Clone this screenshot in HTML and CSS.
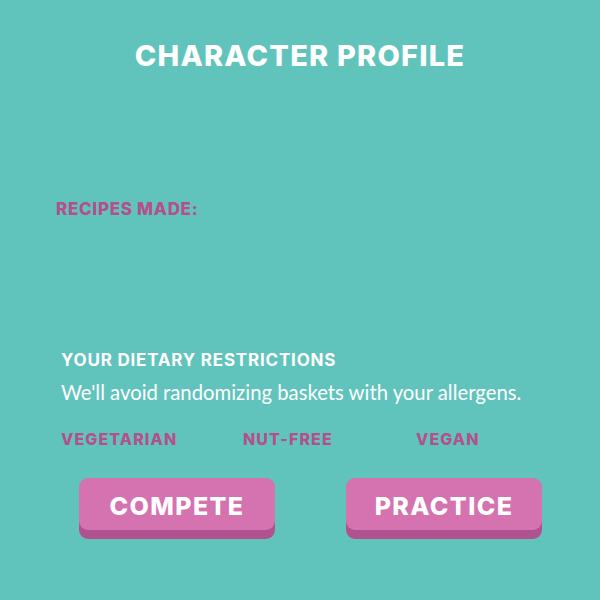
FILE: index.html
```html
<!DOCTYPE html>
<html>
<head>
<meta charset="utf-8">
<link rel="stylesheet" href="styles.css">
</head>
<body>
<main class="page">
  <h1 class="title">CHARACTER PROFILE</h1>
  <section class="recipes">
    <h2 class="recipes-label">RECIPES MADE:</h2>
  </section>
  <section class="diet">
    <h3 class="diet-title">YOUR DIETARY RESTRICTIONS</h3>
    <p class="diet-desc">We'll avoid randomizing baskets with your allergens.</p>
    <div class="diet-options">
      <span class="opt">VEGETARIAN</span>
      <span class="opt">NUT-FREE</span>
      <span class="opt">VEGAN</span>
    </div>
  </section>
  <div class="actions">
    <button class="btn">COMPETE</button>
    <button class="btn">PRACTICE</button>
  </div>
</main>
</body>
</html>
```
FILE: styles.css
```css
html, body {
  margin: 0;
  padding: 0;
}
body {
  background: #61c4bc;
  width: 600px;
  height: 600px;
  overflow: hidden;
  font-family: "Inter", sans-serif;
}
.page {
  display: flex;
  flex-direction: column;
}
.title {
  margin: 38px 0 0;
  text-align: center;
  color: #ffffff;
  font-weight: 800;
  font-size: 29px;
  line-height: 36px;
  letter-spacing: 1.2px;
}
.recipes {
  padding: 0 0 0 56px;
  margin-top: 125px;
  height: 151px;
}
.recipes-label {
  margin: 0;
  color: #b3508e;
  font-weight: 800;
  font-size: 17px;
  line-height: 20px;
  letter-spacing: 0.7px;
}
.diet {
  padding-left: 61px;
}
.diet-title {
  margin: 0;
  color: #ffffff;
  font-weight: 700;
  font-size: 17px;
  line-height: 20px;
  letter-spacing: 0.8px;
}
.diet-desc {
  margin: 10px 0 0;
  color: #ffffff;
  font-family: "Lato", sans-serif;
  font-size: 20.3px;
  line-height: 24px;
  letter-spacing: 0;
}
.diet-options {
  display: grid;
  grid-template-columns: 182px 173px auto;
  margin-top: 25px;
}
.opt {
  color: #b3508e;
  font-weight: 800;
  font-size: 16px;
  line-height: 20px;
  letter-spacing: 1.1px;
}
.actions {
  display: flex;
  gap: 71px;
  padding-left: 79px;
  margin-top: 29px;
}
.btn {
  width: 196px;
  height: 52px;
  border: none;
  border-radius: 9px;
  background: #d473b0;
  box-shadow: 0 9px 0 #b0528f;
  color: #ffffff;
  font-family: "Inter", sans-serif;
  font-weight: 800;
  font-size: 25px;
  letter-spacing: 1.4px;
  padding: 4px 0 0;
}
```
